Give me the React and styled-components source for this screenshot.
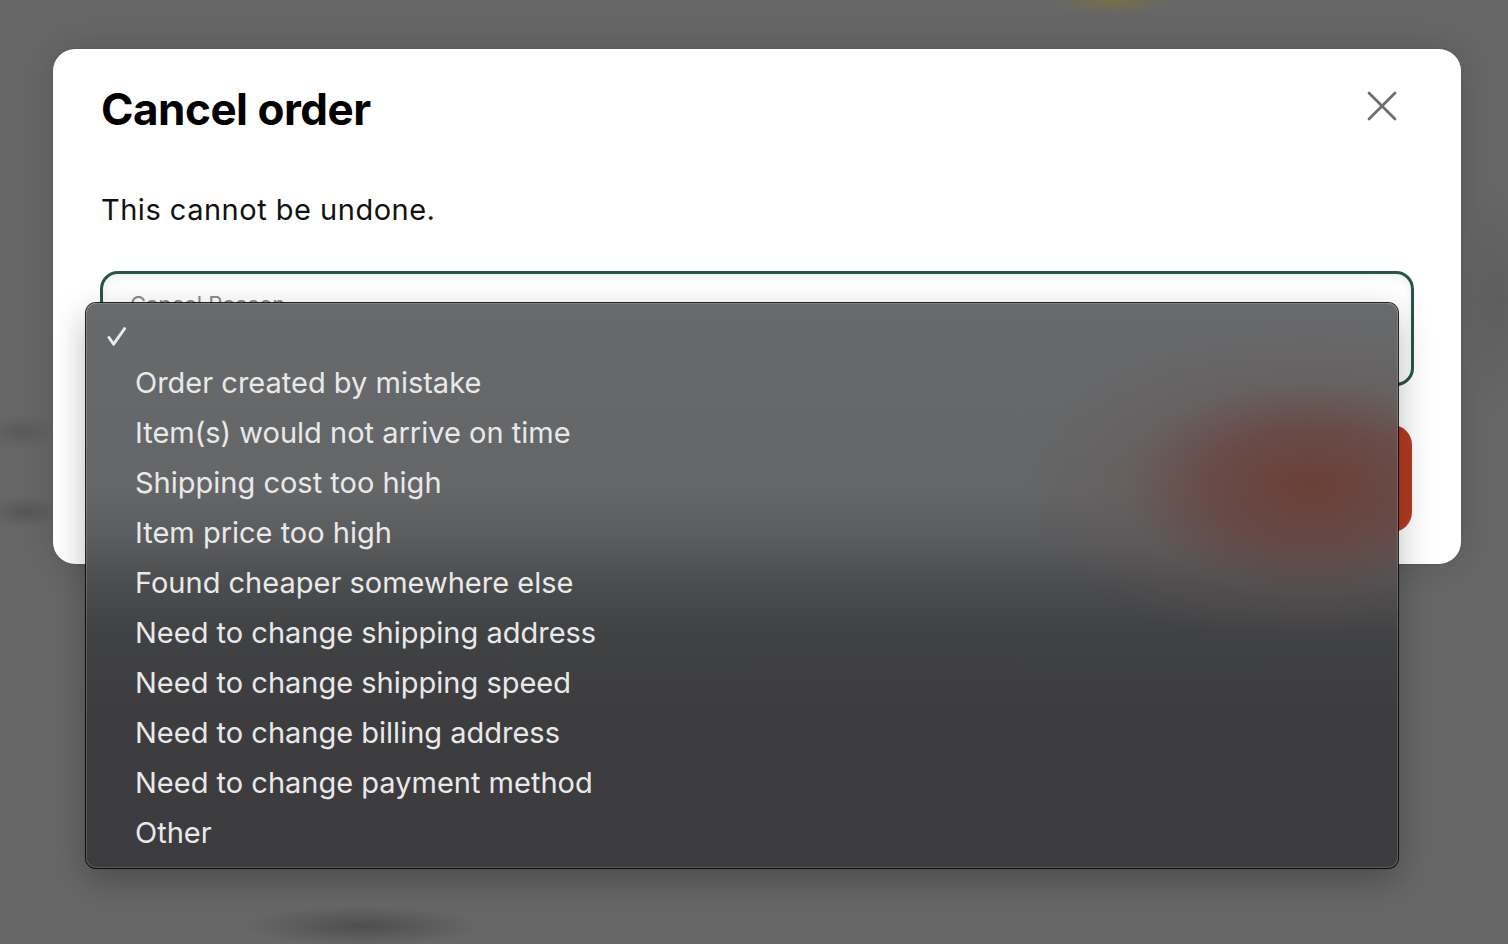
import styled, { createGlobalStyle } from "styled-components";

const reasons = [
  "Order created by mistake",
  "Item(s) would not arrive on time",
  "Shipping cost too high",
  "Item price too high",
  "Found cheaper somewhere else",
  "Need to change shipping address",
  "Need to change shipping speed",
  "Need to change billing address",
  "Need to change payment method",
  "Other",
];

function CheckIcon() {
  return (
    <svg width="20" height="20" viewBox="0 0 20 20" fill="none">
      <path
        d="M2 10.5 L6.6 17.2 L17.6 1.6"
        stroke="#ebebeb"
        strokeWidth="2.9"
        strokeLinecap="round"
        strokeLinejoin="round"
      />
    </svg>
  );
}

function CloseIcon() {
  return (
    <svg width="30" height="30" viewBox="0 0 30 30" fill="none">
      <path
        d="M2 2 L28 28 M28 2 L2 28"
        stroke="#6d6d6d"
        strokeWidth="2.8"
        strokeLinecap="round"
      />
    </svg>
  );
}

export default function App() {
  return (
    <>
      <GlobalStyle />
      <Page>
        <Modal>
          <Header>
            <Title>Cancel order</Title>
            <CloseButton aria-label="Close">
              <CloseIcon />
            </CloseButton>
          </Header>
          <Body>This cannot be undone.</Body>
          <SelectWrap>
            <SelectField>
              <FieldLabel>Cancel Reason</FieldLabel>
            </SelectField>
            <Menu role="listbox">
              <MenuRow $first>
                <CheckCell>
                  <CheckIcon />
                </CheckCell>
              </MenuRow>
              {reasons.map((r) => (
                <MenuRow key={r}>
                  <CheckCell />
                  <RowText>{r}</RowText>
                </MenuRow>
              ))}
            </Menu>
          </SelectWrap>
          <Actions>
            <DangerButton>Cancel order</DangerButton>
          </Actions>
        </Modal>
      </Page>
    </>
  );
}

/////////// styled-component

const GlobalStyle = createGlobalStyle`
  html, body {
    margin: 0;
    padding: 0;
    background: #676767;
  }
  body {
    font-family: Inter, "Noto Sans", "Liberation Sans", sans-serif;
  }
  * {
    box-sizing: border-box;
  }
`;

const Page = styled.div`
  width: 1508px;
  height: 944px;
  overflow: hidden;
  padding: 49px 47px 0 53px;
  background-color: #676767;
  background-image:
    radial-gradient(ellipse 60px 12px at 1112px 2px, rgba(125, 112, 60, 0.7), transparent),
    radial-gradient(ellipse 120px 20px at 362px 926px, rgba(70, 70, 70, 0.75), transparent),
    radial-gradient(ellipse 40px 18px at 20px 432px, rgba(85, 85, 85, 0.7), transparent),
    radial-gradient(ellipse 40px 16px at 24px 512px, rgba(80, 80, 80, 0.7), transparent),
    radial-gradient(ellipse 40px 120px at 1500px 300px, rgba(88, 88, 88, 0.6), transparent);
`;

const Modal = styled.div`
  display: flex;
  flex-direction: column;
  width: 1408px;
  padding: 34px 47px 32px 47px;
  background: #ffffff;
  border-radius: 22px;
  box-shadow: 0 0 40px rgba(0, 0, 0, 0.15), 0 0 0 1px rgba(0, 0, 0, 0.04);
`;

const Header = styled.div`
  display: flex;
  justify-content: space-between;
  align-items: flex-start;
  height: 53px;
`;

const Title = styled.h2`
  margin: 0 0 0 1px;
  font-size: 44px;
  line-height: 1.2;
  font-weight: 700;
  letter-spacing: -0.5px;
  color: #000;
`;

const CloseButton = styled.button`
  display: flex;
  align-items: center;
  justify-content: center;
  width: 44px;
  height: 44px;
  margin: 1px 10px 0 0;
  padding: 0;
  border: none;
  background: transparent;
  cursor: pointer;
`;

const Body = styled.p`
  margin: 57px 0 0 1px;
  font-size: 29px;
  line-height: 1.2;
  color: #111;
  letter-spacing: 0.5px;
`;

const SelectWrap = styled.div`
  position: relative;
  margin-top: 43px;
`;

const SelectField = styled.div`
  height: 115px;
  padding: 17px 27px;
  border: 3px solid #285641;
  border-radius: 18px;
  background: #fff;
  box-shadow: inset 0 3px 8px rgba(0, 0, 0, 0.07);
`;

const FieldLabel = styled.div`
  font-size: 22px;
  line-height: 1.2;
  color: #8a8a8a;
`;

const Menu = styled.div`
  position: absolute;
  top: 32px;
  left: -14px;
  z-index: 10;
  width: 1312px;
  padding: 9px 0 9px;
  border-radius: 10px;
  background:
    radial-gradient(
      ellipse 290px 160px at 1225px 182px,
      rgba(108, 60, 52, 0.92) 0%,
      rgba(106, 64, 58, 0.7) 35%,
      rgba(104, 84, 82, 0.3) 65%,
      rgba(104, 96, 96, 0) 100%
    ),
    linear-gradient(
      180deg,
      #68696b 0%,
      #646667 33%,
      #5a5b5d 42%,
      #4b4c4e 50%,
      #414244 58%,
      #3d3d3f 72%,
      #3c3c3e 100%
    );
  box-shadow:
    0 0 0 1px rgba(0, 0, 0, 0.85),
    inset 0 0 0 1px rgba(255, 255, 255, 0.16),
    0 12px 34px rgba(0, 0, 0, 0.28);
`;

const MenuRow = styled.div`
  display: flex;
  align-items: center;
  height: ${(p) => (p.$first ? "47px" : "50px")};
  color: #e9e9e9;
`;

const CheckCell = styled.div`
  display: flex;
  align-items: center;
  width: 49px;
  padding: 3px 0 0 21px;
  flex-shrink: 0;
`;

const RowText = styled.span`
  font-size: 29px;
  line-height: 1.2;
  letter-spacing: 0;
`;

const Actions = styled.div`
  display: flex;
  justify-content: flex-end;
  margin-top: 39px;
  padding-right: 2px;
`;

const DangerButton = styled.button`
  width: 232px;
  height: 107px;
  border: none;
  border-radius: 20px;
  background: #b53b22;
  color: #fff;
  font-family: inherit;
  font-size: 28px;
  font-weight: 600;
`;
